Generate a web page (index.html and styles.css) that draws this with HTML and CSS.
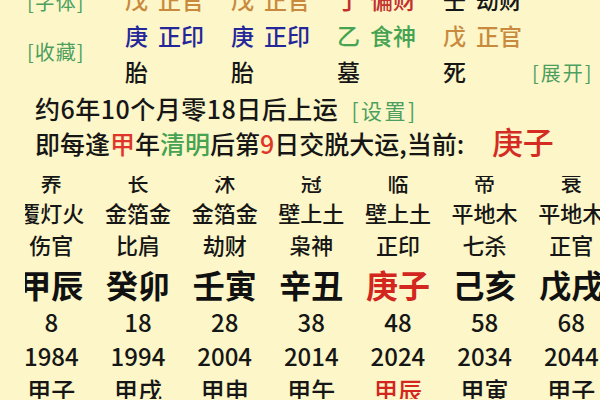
FILE: index.html
```html
<!DOCTYPE html>
<html lang="zh">
<head>
<meta charset="utf-8">
<title>大运</title>
<link rel="stylesheet" href="styles.css">
</head>
<body>
<div class="page">
  <section class="chart">
    <div class="labels">
      <span class="link">[字体]</span>
      <span class="link">[收藏]</span>
    </div>
    <div class="pillars">
      <div class="cell orange"><span class="stem">戊</span>正官</div>
      <div class="cell orange"><span class="stem">戊</span>正官</div>
      <div class="cell red"><span class="stem">丁</span>偏财</div>
      <div class="cell"><span class="stem">壬</span>劫财</div>
      <div class="cell"></div>

      <div class="cell blue"><span class="stem">庚</span>正印</div>
      <div class="cell blue"><span class="stem">庚</span>正印</div>
      <div class="cell green"><span class="stem">乙</span>食神</div>
      <div class="cell orange"><span class="stem">戊</span>正官</div>
      <div class="cell"></div>

      <div class="cell">胎</div>
      <div class="cell">胎</div>
      <div class="cell">墓</div>
      <div class="cell">死</div>
      <div class="cell"><span class="link expand">[展开]</span></div>
    </div>
  </section>

  <section class="yun-info">
    <p class="line first">约6年10个月零18日后上运 <span class="link setting">[设置]</span></p>
    <p class="line">即每逢<span class="red2">甲</span>年<span class="green">清明</span>后第<span class="red2">9</span>日交脱大运,当前: <span class="current">庚子</span></p>
  </section>

  <section class="dayun-wrap">
    <div class="dayun">
      <div class="col">
        <span class="cs">养</span><span class="ny">覆灯火</span><span class="ss">伤官</span><span class="gz">甲辰</span><span class="age">8</span><span class="yr">1984</span><span class="jz">甲子</span>
      </div>
      <div class="col">
        <span class="cs">长</span><span class="ny">金箔金</span><span class="ss">比肩</span><span class="gz">癸卯</span><span class="age">18</span><span class="yr">1994</span><span class="jz">甲戌</span>
      </div>
      <div class="col">
        <span class="cs">沐</span><span class="ny">金箔金</span><span class="ss">劫财</span><span class="gz">壬寅</span><span class="age">28</span><span class="yr">2004</span><span class="jz">甲申</span>
      </div>
      <div class="col">
        <span class="cs">冠</span><span class="ny">壁上土</span><span class="ss">枭神</span><span class="gz">辛丑</span><span class="age">38</span><span class="yr">2014</span><span class="jz">甲午</span>
      </div>
      <div class="col">
        <span class="cs">临</span><span class="ny">壁上土</span><span class="ss">正印</span><span class="gz current-gz">庚子</span><span class="age">48</span><span class="yr">2024</span><span class="jz red-jz">甲辰</span>
      </div>
      <div class="col">
        <span class="cs">帝</span><span class="ny">平地木</span><span class="ss">七杀</span><span class="gz">己亥</span><span class="age">58</span><span class="yr">2034</span><span class="jz">甲寅</span>
      </div>
      <div class="col">
        <span class="cs">衰</span><span class="ny">平地木</span><span class="ss">正官</span><span class="gz">戊戌</span><span class="age">68</span><span class="yr">2044</span><span class="jz">甲子</span>
      </div>
    </div>
  </section>
</div>
</body>
</html>
```

FILE: styles.css
```css
html, body {
  margin: 0;
  padding: 0;
}
body {
  width: 600px;
  height: 400px;
  overflow: hidden;
  background: #fcf6c8;
  font-family: "Noto Sans CJK SC", "Noto Sans", sans-serif;
  font-weight: 500;
  color: #161616;
}
.page {
  padding-top: 1px;
}
.chart {
  display: flex;
  margin-top: -20px;
  padding-left: 27px;
}
.labels {
  display: flex;
  flex-direction: column;
  width: 98px;
  margin-top: -4px;
}
.labels .link {
  font-size: 20px;
  line-height: 50px;
  letter-spacing: 1px;
}
.link {
  color: #4c9f5e;
  font-weight: 400;
}
.pillars {
  display: grid;
  grid-template-columns: 106px 106px 106px 89px auto;
  grid-auto-rows: 36px;
  font-size: 23px;
  line-height: 36px;
  white-space: nowrap;
}
.stem {
  margin-right: 10px;
}
.expand {
  font-size: 20px;
  letter-spacing: 2px;
}
.orange { color: #c98a3e; }
.blue { color: #24269a; }
.green { color: #45a352; }
.red { color: #c3302e; }
.red2 { color: #e0352a; }

.yun-info {
  padding-left: 35px;
  margin-top: 2px;
  font-size: 25px;
}
.line {
  margin: 0;
  height: 35px;
  line-height: 35px;
  white-space: nowrap;
}
.line.first {
  letter-spacing: 0.5px;
}
.setting {
  font-size: 21px;
  letter-spacing: 2.5px;
  margin-left: 7px;
}
.current {
  font-size: 31px;
  line-height: 30px;
  color: #d42b22;
  margin-left: 22px;
}

.dayun-wrap {
  margin-top: 15px;
  margin-left: 25px;
  height: 223px;
  overflow: hidden;
}
.dayun {
  display: flex;
  margin-left: -17px;
  margin-top: -9px;
}
.col {
  flex: 0 0 86.67px;
  display: flex;
  flex-direction: column;
  align-items: center;
  white-space: nowrap;
}
.cs { font-size: 21px; line-height: 30px; }
.ny { font-size: 22px; line-height: 31px; }
.ss { font-size: 22px; line-height: 32px; }
.gz { font-size: 32px; line-height: 48px; font-weight: 700; color: #111; }
.age { font-size: 24px; line-height: 28px; }
.yr { font-size: 24px; line-height: 40px; }
.jz { font-size: 24px; line-height: 28px; }
.current-gz { color: #d2261f; }
.red-jz { color: #d2261f; }
```
